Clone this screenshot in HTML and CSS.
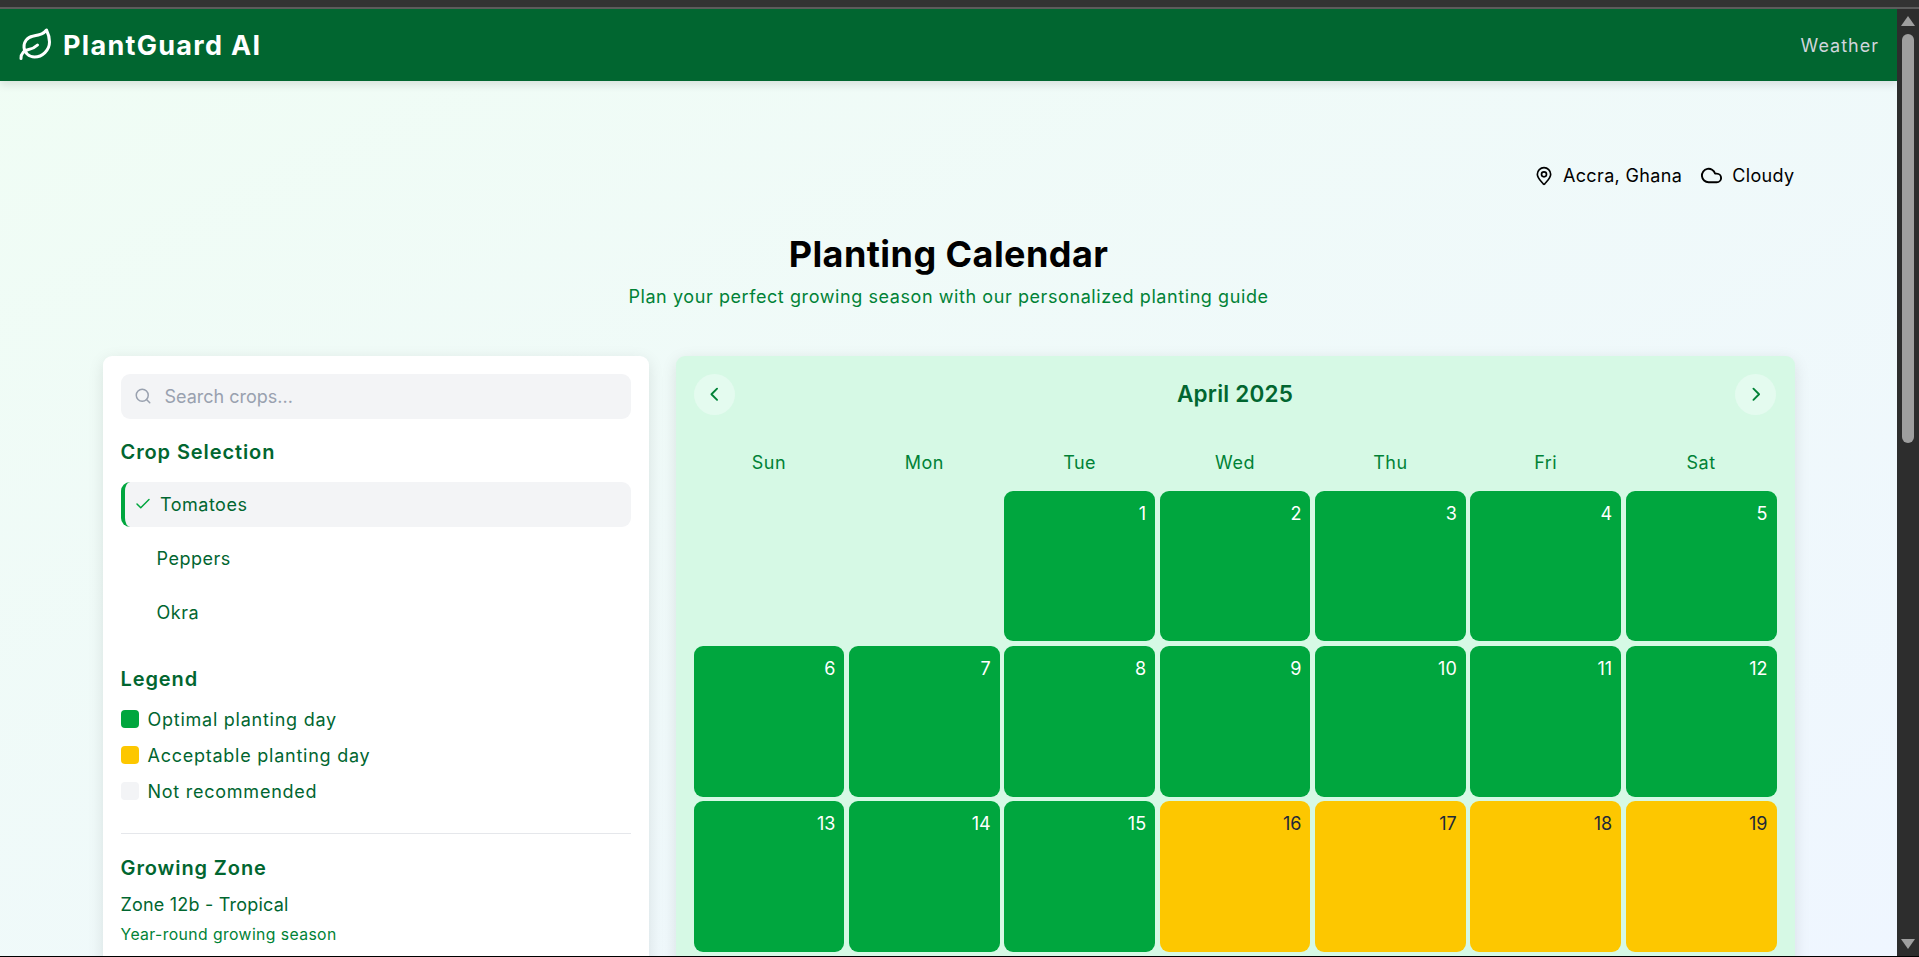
FILE: index.html
```html
<!DOCTYPE html>
<html lang="en">
<head>
  <meta charset="UTF-8">
  <meta name="viewport" content="width=device-width, initial-scale=1.0">
  <title>PlantGuard AI - Planting Calendar</title>
  <link rel="stylesheet" href="styles.css">
</head>
<body>
  <div class="topline"></div>
  <div class="window">
    <div class="page">
      <header class="navbar">
        <div class="brand">
          <svg class="brand-icon" viewBox="0 0 24 24" fill="none" stroke="currentColor" stroke-width="2" stroke-linecap="round" stroke-linejoin="round">
            <path d="M11 20A7 7 0 0 1 9.8 6.1C15.5 5 17 4.48 19 2c1 2 2 4.18 2 8 0 5.5-4.78 10-10 10Z"/>
            <path d="M2 21c0-3 1.85-5.36 5.08-6C9.5 14.52 12 13 13 12"/>
          </svg>
          <span>PlantGuard AI</span>
        </div>
        <a class="nav-link">Weather</a>
      </header>

      <main class="content">
        <div class="status">
          <span class="status-item">
            <svg class="status-icon" viewBox="0 0 24 24" fill="none" stroke="currentColor" stroke-width="2" stroke-linecap="round" stroke-linejoin="round">
              <path d="M20 10c0 5-5.5 9.2-7.4 11.8a1 1 0 0 1-1.2 0C9.5 19.2 4 15 4 10a8 8 0 0 1 16 0"/>
              <circle cx="12" cy="10" r="3"/>
            </svg>
            Accra, Ghana
          </span>
          <span class="status-item">
            <svg class="status-icon cloud-icon" viewBox="0 0 24 24" fill="none" stroke="currentColor" stroke-width="2" stroke-linecap="round" stroke-linejoin="round">
              <path d="M17.5 19H9a7 7 0 1 1 6.71-9h1.79a4.5 4.5 0 1 1 0 9Z"/>
            </svg>
            Cloudy
          </span>
        </div>

        <div class="title-block">
          <h1>Planting Calendar</h1>
          <p>Plan your perfect growing season with our personalized planting guide</p>
        </div>

        <div class="columns">
          <aside class="sidebar">
            <div class="search">
              <svg class="search-icon" viewBox="0 0 24 24" fill="none" stroke="currentColor" stroke-width="2" stroke-linecap="round" stroke-linejoin="round">
                <circle cx="11" cy="11" r="8"/>
                <path d="m21 21-4.3-4.3"/>
              </svg>
              <span>Search crops...</span>
            </div>

            <h3>Crop Selection</h3>
            <div class="crop crop-active">
              <svg class="check-icon" viewBox="0 0 24 24" fill="none" stroke="currentColor" stroke-width="2" stroke-linecap="round" stroke-linejoin="round">
                <path d="M20 6 9 17l-5-5"/>
              </svg>
              Tomatoes
            </div>
            <div class="crop">Peppers</div>
            <div class="crop">Okra</div>

            <h3 class="legend-title">Legend</h3>
            <div class="legend-row"><span class="swatch swatch-green"></span>Optimal planting day</div>
            <div class="legend-row"><span class="swatch swatch-yellow"></span>Acceptable planting day</div>
            <div class="legend-row"><span class="swatch swatch-gray"></span>Not recommended</div>

            <hr class="divider">

            <h3 class="zone-title">Growing Zone</h3>
            <div class="zone">Zone 12b - Tropical</div>
            <div class="zone-note">Year-round growing season</div>
          </aside>

          <section class="calendar">
            <div class="cal-head">
              <button class="cal-nav">
                <svg viewBox="0 0 24 24" fill="none" stroke="currentColor" stroke-width="2" stroke-linecap="round" stroke-linejoin="round"><path d="m15 18-6-6 6-6"/></svg>
              </button>
              <h2>April 2025</h2>
              <button class="cal-nav">
                <svg viewBox="0 0 24 24" fill="none" stroke="currentColor" stroke-width="2" stroke-linecap="round" stroke-linejoin="round"><path d="m9 18 6-6-6-6"/></svg>
              </button>
            </div>
            <div class="weekdays">
              <span>Sun</span><span>Mon</span><span>Tue</span><span>Wed</span><span>Thu</span><span>Fri</span><span>Sat</span>
            </div>
            <div class="days">
              <div class="day-empty"></div>
              <div class="day-empty"></div>
              <div class="day good">1</div>
              <div class="day good">2</div>
              <div class="day good">3</div>
              <div class="day good">4</div>
              <div class="day good">5</div>
              <div class="day good">6</div>
              <div class="day good">7</div>
              <div class="day good">8</div>
              <div class="day good">9</div>
              <div class="day good">10</div>
              <div class="day good">11</div>
              <div class="day good">12</div>
              <div class="day good">13</div>
              <div class="day good">14</div>
              <div class="day good">15</div>
              <div class="day ok">16</div>
              <div class="day ok">17</div>
              <div class="day ok">18</div>
              <div class="day ok">19</div>
            </div>
          </section>
        </div>
      </main>
    </div>

    <div class="scrollbar">
      <span class="arrow-up"></span>
      <div class="track"><div class="thumb"></div></div>
      <span class="arrow-down"></span>
    </div>
  </div>
  <div class="bottomline"></div>
</body>
</html>
```

FILE: styles.css
```css
* {
  box-sizing: border-box;
}

html, body {
  height: 100%;
}

body {
  margin: 0;
  display: flex;
  flex-direction: column;
  overflow: hidden;
  background: #2d2d2d;
  font-family: Inter, "Open Sans", sans-serif;
  font-size: 18px;
  color: #016630;
}

.topline {
  height: 9px;
  flex: none;
  background: #333333;
  border-bottom: 2px solid #5c5c5c;
}

.bottomline {
  height: 1px;
  flex: none;
  background: #000;
}

.window {
  flex: 1;
  min-height: 0;
  display: flex;
}

.page {
  flex: 1;
  min-width: 0;
  overflow: hidden;
  background: linear-gradient(to bottom right, #f0fdf4, #eff6ff);
}

.navbar {
  height: 72px;
  padding: 0 18px;
  display: flex;
  align-items: center;
  justify-content: space-between;
  background: #016630;
  color: white;
  box-shadow: 0 4px 8px rgba(0, 0, 0, 0.1);
}

.brand {
  display: flex;
  align-items: center;
  gap: 9px;
  font-size: 27px;
  font-weight: 700;
  letter-spacing: 1.3px;
}

.brand-icon {
  width: 36px;
  height: 36px;
}

.nav-link {
  color: #d1d5dc;
  font-size: 18px;
  letter-spacing: 1px;
}

.content {
  width: 1692px;
  margin: 0 auto;
  padding-top: 81px;
}

.status {
  display: flex;
  justify-content: flex-end;
  gap: 18px;
  color: #000;
  font-size: 18px;
  line-height: 27px;
  letter-spacing: 0.35px;
}

.status-item {
  display: flex;
  align-items: center;
  gap: 9px;
}

.status-icon {
  width: 20px;
  height: 20px;
}

.cloud-icon {
  width: 23px;
  height: 23px;
}

.title-block {
  margin-top: 43px;
  text-align: center;
}

h1 {
  margin: 0;
  color: #000;
  font-size: 36px;
  line-height: 45px;
  font-weight: 700;
  letter-spacing: 0.43px;
}

.title-block p {
  margin: 5.5px 0 0;
  color: #008236;
  font-size: 18px;
  line-height: 27px;
  letter-spacing: 0.58px;
}

.columns {
  display: grid;
  grid-template-columns: 546px 1fr;
  gap: 27px;
  margin-top: 46px;
}

.sidebar {
  padding: 18px;
  background: white;
  border-radius: 9px;
  box-shadow: 0 4px 16px rgba(0, 0, 0, 0.1);
}

.search {
  height: 45px;
  padding-left: 13px;
  display: flex;
  align-items: center;
  gap: 13px;
  background: #f3f4f6;
  border-radius: 9px;
  color: #99a1af;
}

.search-icon {
  width: 18px;
  height: 18px;
}

h3 {
  margin: 20.5px 0 15.5px;
  color: #016630;
  font-size: 20px;
  line-height: 27px;
  font-weight: 600;
  letter-spacing: 0.9px;
}

.crop {
  height: 45px;
  margin-bottom: 9px;
  padding-left: 36px;
  display: flex;
  align-items: center;
  border-radius: 9px;
  line-height: 27px;
  letter-spacing: 0.5px;
}

.crop-active {
  padding-left: 9.5px;
  gap: 8px;
  background: #f3f4f6;
  border-left: 4px solid #00a63e;
}

.check-icon {
  width: 18px;
  height: 18px;
  color: #00a63e;
}

h3.legend-title {
  margin-top: 31px;
  margin-bottom: 13px;
}

.legend-row {
  display: flex;
  align-items: center;
  gap: 9px;
  height: 27px;
  margin-bottom: 9px;
  letter-spacing: 0.75px;
}

.swatch {
  width: 18px;
  height: 18px;
  border-radius: 4px;
}

.swatch-green {
  background: #00a63e;
}

.swatch-yellow {
  background: #fdc700;
}

.swatch-gray {
  background: #f3f4f6;
}

.divider {
  margin: 28px 0 21px;
  border: none;
  border-top: 1px solid #e5e7eb;
}

h3.zone-title {
  margin-top: 0;
  margin-bottom: 9.5px;
}

.zone {
  line-height: 27px;
  letter-spacing: 0.2px;
}

.zone-note {
  margin-top: 3px;
  font-size: 15.75px;
  line-height: 27px;
  color: #008236;
  letter-spacing: 0.4px;
}

.calendar {
  padding: 18px;
  background: #d6f9e5;
  border-radius: 9px;
  box-shadow: 0 4px 16px rgba(0, 0, 0, 0.1);
}

.cal-head {
  display: flex;
  align-items: center;
  justify-content: space-between;
}

.cal-head h2 {
  margin: 0;
  padding-bottom: 2px;
  color: #016630;
  font-size: 22.5px;
  font-weight: 600;
  letter-spacing: 0.2px;
}

.cal-nav {
  width: 41px;
  height: 41px;
  padding: 0;
  display: flex;
  align-items: center;
  justify-content: center;
  border: none;
  border-radius: 50%;
  background: #e4fbef;
  color: #008236;
}

.cal-nav svg {
  width: 22.5px;
  height: 22.5px;
}

.weekdays {
  display: grid;
  grid-template-columns: repeat(7, 1fr);
  gap: 4.5px;
  margin-top: 28px;
  text-align: center;
  color: #008236;
  line-height: 40px;
  letter-spacing: 0.5px;
}

.days {
  display: grid;
  grid-template-columns: repeat(7, 1fr);
  gap: 4.5px;
  margin-top: 8px;
}

.day {
  aspect-ratio: 1;
  padding: 9px;
  text-align: right;
  border-radius: 9px;
  line-height: 27px;
}

.good {
  background: #00a63e;
  color: white;
}

.ok {
  background: #fdc700;
  color: #1e2939;
}

.scrollbar {
  width: 22px;
  flex: none;
  display: flex;
  flex-direction: column;
  align-items: center;
  padding: 7px 0;
  background: #2d2d2d;
}

.track {
  flex: 1;
  width: 100%;
  padding: 8px 5px 0;
}

.thumb {
  height: 409px;
  background: #9f9f9f;
  border-radius: 7px;
}

.arrow-up {
  border-left: 7px solid transparent;
  border-right: 7px solid transparent;
  border-bottom: 10px solid #9f9f9f;
}

.arrow-down {
  border-left: 7px solid transparent;
  border-right: 7px solid transparent;
  border-top: 10px solid #9f9f9f;
}
```
